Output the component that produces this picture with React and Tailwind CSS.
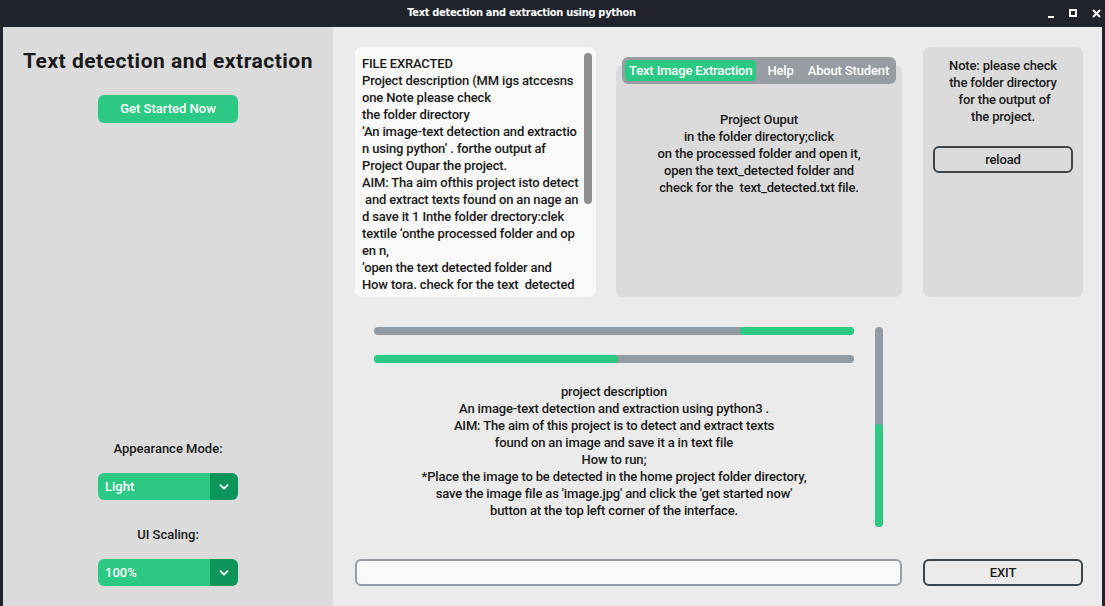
import React from 'react';

const Chevron = () => (
  <svg width="10" height="6" viewBox="0 0 10 6" fill="none">
    <path d="M1.5 1.2 L5 4.6 L8.5 1.2" stroke="#ffffff" strokeWidth="1.8" strokeLinecap="round" strokeLinejoin="round" />
  </svg>
);

const OptionMenu = ({ value }) => (
  <div className="flex w-[140px] h-[27px] rounded-[6px] overflow-hidden">
    <div className="flex-1 bg-[#2cc985] text-white text-[13px] font-medium flex items-center pl-[7px]">{value}</div>
    <div className="w-[28px] bg-[#0c955a] flex items-center justify-center">
      <Chevron />
    </div>
  </div>
);

const extracted = [
  'FILE EXRACTED',
  'Project description (MM igs atccesns',
  'one Note please check',
  'the folder directory',
  '‘An image-text detection and extractio',
  'n using python’ . forthe output af',
  'Project Oupar the project.',
  'AIM: Tha aim ofthis project isto detect',
  ' and extract texts found on an nage an',
  'd save it 1 Inthe folder drectory:clek',
  'textile ‘onthe processed folder and op',
  'en n,',
  '‘open the text detected folder and',
  'How tora. check for the text  detected',
];

const description = [
  'project description',
  'An image-text detection and extraction using python3 .',
  'AIM: The aim of this project is to detect and extract texts',
  'found on an image and save it a in text file',
  'How to run;',
  '*Place the image to be detected in the home project folder directory,',
  "save the image file as 'image.jpg' and click the 'get started now'",
  'button at the top left corner of the interface.',
];

export default function App() {
  return (
    <div className="w-[1105px] h-[606px] bg-[#20232b] flex flex-col overflow-hidden text-[#1a1a1a]" style={{ fontFamily: 'Roboto, "Noto Sans", sans-serif' }}>
      {/* title bar */}
      <div className="h-[27px] flex items-center relative shrink-0">
        <div className="flex-1 pr-[62px] text-center text-white text-[11px] font-bold tracking-[-0.3px]" style={{ fontFamily: '"DejaVu Sans Condensed", "DejaVu Sans", sans-serif' }}>
          Text detection and extraction using python
        </div>
        <div className="absolute right-[4px] top-[8px] flex items-center gap-[15px] text-white">
          <div className="w-[6px] h-[2px] bg-white mt-[8px]" />
          <div className="w-[8px] h-[8px] border-2 border-white" />
          <svg width="9" height="9" viewBox="0 0 9 9"><path d="M1 1 L8 8 M8 1 L1 8" stroke="#fff" strokeWidth="2" /></svg>
        </div>
      </div>

      <div className="flex-1 flex mx-[3px]">
        {/* sidebar */}
        <div className="w-[330px] bg-[#dbdbdb] flex flex-col items-center">
          <div className="mt-[21px] text-[21px] font-bold leading-[26px] tracking-[0.5px]">Text detection and extraction</div>
          <div className="mt-[21px] w-[140px] h-[28px] rounded-[6px] bg-[#2cc985] text-white text-[13px] font-medium flex items-center justify-center">
            Get Started Now
          </div>
          <div className="mt-[317px] text-[13px] font-medium leading-[17px]">Appearance Mode:</div>
          <div className="mt-[16px]"><OptionMenu value="Light" /></div>
          <div className="mt-[26px] text-[13px] font-medium leading-[17px]">UI Scaling:</div>
          <div className="mt-[16px]"><OptionMenu value="100%" /></div>
        </div>

        {/* main */}
        <div className="flex-1 bg-[#ebebeb] flex flex-col text-[13px] font-medium tracking-[-0.15px]">
          <div className="flex pt-[20px] pl-[22px]">
            {/* textbox */}
            <div className="w-[241px] h-[250px] bg-[#f9f9f9] rounded-[7px] relative overflow-hidden">
              <div className="pl-[7px] pt-[8px] leading-[17px] whitespace-pre">
                {extracted.map((l, i) => (
                  <div key={i}>{l}</div>
                ))}
              </div>
              <div className="absolute right-[4px] top-[6px] w-[8px] h-[151px] rounded-full bg-[#8f8f8f]" />
            </div>

            {/* tabview */}
            <div className="ml-[20px] w-[286px] h-[240px] mt-[10px] flex flex-col">
              <div className="relative z-10 mx-[6px] h-[27px] rounded-[6px] bg-[#979da2] flex items-center px-[3px] text-white whitespace-nowrap">
                <div className="shrink-0 h-[21px] px-[4px] rounded-[4px] bg-[#2cc985] flex items-center">Text Image Extraction</div>
                <div className="shrink-0 ml-[11px]">Help</div>
                <div className="shrink-0 ml-[14px]">About Student</div>
              </div>
              <div className="-mt-[19px] flex-1 bg-[#dbdbdb] rounded-[7px] pt-[46px] text-center leading-[17px]">
                <div>Project Ouput</div>
                <div>in the folder directory;click</div>
                <div>on the processed folder and open it,</div>
                <div>open the text_detected folder and</div>
                <div className="whitespace-pre">check for the  text_detected.txt file.</div>
              </div>
            </div>

            {/* note frame */}
            <div className="ml-[21px] w-[160px] h-[250px] bg-[#dbdbdb] rounded-[7px] flex flex-col items-center">
              <div className="pt-[10px] text-center leading-[17px] whitespace-pre">
                <div>Note: please check</div>
                <div>the folder directory</div>
                <div> for the output of</div>
                <div>the project.</div>
              </div>
              <div className="mt-[21px] w-[140px] h-[27px] rounded-[6px] border-2 border-[#3e454a] flex items-center justify-center">reload</div>
            </div>
          </div>

          {/* progress + description */}
          <div className="flex pl-[41px] pt-[30px]">
            <div className="w-[480px] flex flex-col">
              <div className="h-[8px] rounded-full bg-[#939ba2] flex justify-end">
                <div className="w-[114px] h-full rounded-full bg-[#2cc985]" />
              </div>
              <div className="mt-[20px] h-[8px] rounded-full bg-[#939ba2] flex">
                <div className="w-[244px] h-full rounded-full bg-[#2cc985]" />
              </div>
              <div className="mt-[20px] text-center leading-[17px]">
                {description.map((l, i) => (
                  <div key={i}>{l}</div>
                ))}
              </div>
            </div>
            <div className="ml-[21px] w-[8px] h-[200px] rounded-full bg-[#939ba2] flex flex-col justify-end">
              <div className="h-[103px] rounded-full bg-[#2cc985]" />
            </div>
          </div>

          {/* bottom row */}
          <div className="flex pl-[22px] mt-[32px]">
            <div className="w-[547px] h-[27px] rounded-[6px] border-2 border-[#979da2] bg-[#f9f9f9]" />
            <div className="ml-[21px] w-[160px] h-[27px] rounded-[6px] border-2 border-[#3e454a] flex items-center justify-center">EXIT</div>
          </div>
        </div>
      </div>
    </div>
  );
}
